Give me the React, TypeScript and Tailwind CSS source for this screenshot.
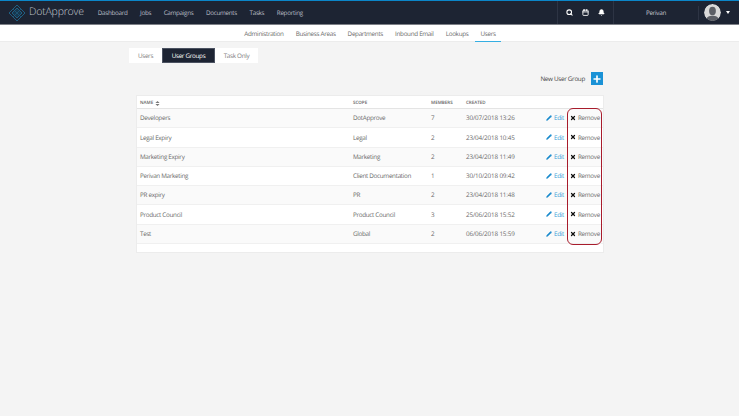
import { Search, Calendar, Bell, Plus, Pencil, X } from "lucide-react";

const navItems = ["Dashboard", "Jobs", "Campaigns", "Documents", "Tasks", "Reporting"];
const subItems = ["Administration", "Business Areas", "Departments", "Inbound Email", "Lookups", "Users"];

const groups = [
  { name: "Developers", scope: "DotApprove", members: 7, created: "30/07/2018 13:26" },
  { name: "Legal Expiry", scope: "Legal", members: 2, created: "23/04/2018 10:45" },
  { name: "Marketing Expiry", scope: "Marketing", members: 2, created: "23/04/2018 11:49" },
  { name: "Perivan Marketing", scope: "Client Documentation", members: 1, created: "30/10/2018 09:42" },
  { name: "PR expiry", scope: "PR", members: 2, created: "23/04/2018 11:48" },
  { name: "Product Council", scope: "Product Council", members: 3, created: "25/06/2018 15:52" },
  { name: "Test", scope: "Global", members: 2, created: "06/06/2018 15:59" },
];

function Logo() {
  return (
    <svg width="18" height="18" viewBox="0 0 18 18" fill="none" stroke="#1f5f82" strokeWidth="1">
      <path d="M9 1 17 9 9 17 1 9Z" />
      <path d="M9 4 14 9 9 14 4 9Z" fill="#17384f" />
      <path d="M5 5 13 13M13 5 5 13" strokeWidth="0.7" />
    </svg>
  );
}

function Avatar() {
  return (
    <svg width="17" height="17" viewBox="0 0 16 16" className="rounded-full">
      <circle cx="8" cy="8" r="8" fill="#d9d9d9" />
      <ellipse cx="8" cy="6.5" rx="3.2" ry="4" fill="#5c5f66" />
      <path d="M1.500 16c.5-4 3.500-5 6.500-5s6 1 6.500 5Z" fill="#5c5f66" />
    </svg>
  );
}

function SortIcon() {
  return (
    <svg width="5" height="5" viewBox="0 0 6 6" fill="#777" className="ml-[1.500px]">
      <path d="M3 0 5.500 2.500H.5ZM3 6 .5 3.500H5.500Z" />
    </svg>
  );
}

export default function App() {
  return (
    <div className="min-h-[416px] bg-[#f4f4f4] font-['Open_Sans',sans-serif] text-[#6a6a6a] tracking-[-0.3px] [text-rendering:geometricPrecision]">
      <div className="flex h-[25px] items-center border-t border-b border-t-[#0b86c9] border-b-[#7d8087] bg-[#1d2433]">
        <div className="flex items-center pl-[8px]">
          <Logo />
          <span className="ml-[3px] text-[10.500px] font-light tracking-[-0.2px] text-[#c5c9d0]">DotApprove</span>
        </div>
        <div className="ml-[14px] flex gap-[12.500px] pt-[1px] text-[6.300px] text-[#b9bdc5]">
          {navItems.map((item) => (
            <span key={item}>{item}</span>
          ))}
        </div>
        <div className="ml-auto flex h-full items-center">
          <div className="flex h-full w-[57px] items-center justify-center gap-[9px] border-x border-[#2d3444] text-white">
            <Search size={7} strokeWidth={3.500} />
            <Calendar size={7} strokeWidth={3} />
            <Bell size={7} fill="white" />
          </div>
          <div className="w-[84px] pt-[1px] text-center text-[6.300px] text-[#c5c9d0]">Perivan</div>
          <div className="flex h-[14px] w-[41px] items-center border-l border-[#2d3444] pl-[5px]">
            <Avatar />
            <span className="ml-[5px] h-0 w-0 border-x-[2.500px] border-t-[3px] border-x-transparent border-t-white" />
          </div>
        </div>
      </div>

      <div className="flex h-[17px] justify-center gap-[12px] border-b border-[#ececec] bg-white pl-[6px] text-[6.300px] text-[#6a6a6a]">
        {subItems.map((item) => (
          <span
            key={item}
            className={
              item === "Users"
                ? "-mb-px -ml-[5px] flex items-center border-b border-[#35aee2] px-[5px] pt-[1px]"
                : "flex items-center pt-[1px]"
            }
          >
            {item}
          </span>
        ))}
      </div>

      <div className="ml-[129px] mt-[6px] flex h-[15px] w-[129px] bg-white text-[6.300px]">
        <span className="flex w-[33px] items-center justify-center pt-[1px] text-[#808080]">Users</span>
        <span className="flex w-[53px] items-center justify-center border border-[#4b5261] bg-[#1d2433] pt-[1px] text-white">
          User Groups
        </span>
        <span className="flex flex-1 items-center justify-center pt-[1px] text-[#808080]">Task Only</span>
      </div>

      <div className="mt-[9px] flex h-[13px] items-center justify-end pr-[136px]">
        <span className="mr-[6px] text-[6.300px] font-medium text-[#444]">New User Group</span>
        <span className="flex h-[13px] w-[12px] items-center justify-center bg-[#1a92d6]">
          <Plus size={10} strokeWidth={4} className="text-white" />
        </span>
      </div>

      <div className="relative ml-[136px] mt-[10px] h-[158px] w-[468px] border border-[#ececec] bg-white pb-[8px]">
        <div className="flex h-[13px] items-end border-b border-[#e4e4e4] pb-[1px] text-[4.500px] font-semibold uppercase tracking-normal text-[#666]">
          <span className="flex w-[216px] items-center pl-[3px]">
            Name
            <SortIcon />
          </span>
          <span className="w-[78px]">Scope</span>
          <span className="w-[35px]">Members</span>
          <span>Created</span>
        </div>
        {groups.map((group, i) => (
          <div
            key={group.name}
            className={
              "flex h-[19.25px] items-center border-b border-[#f0f0f0] text-[6.300px] " +
              (i % 2 === 0 ? "bg-[#fafafa]" : "bg-white")
            }
          >
            <span className="w-[216px] pl-[3px]">{group.name}</span>
            <span className="w-[78px]">{group.scope}</span>
            <span className="w-[35px]">{group.members}</span>
            <span className="w-[80px] tracking-[-0.15px]">{group.created}</span>
            <span className="flex w-[24px] items-center text-[#3a9fd8]">
              <Pencil size={6} fill="#1a88c9" className="mr-[2px]" />
              Edit
            </span>
            <span className="flex items-center">
              <X size={6} strokeWidth={5} className="mr-[2px] text-[#111]" />
              Remove
            </span>
          </div>
        ))}
        <div className="absolute left-[430px] top-[12px] h-[137px] w-[35px] rounded-[6px] border border-[#a81c2c]" />
      </div>
    </div>
  );
}
